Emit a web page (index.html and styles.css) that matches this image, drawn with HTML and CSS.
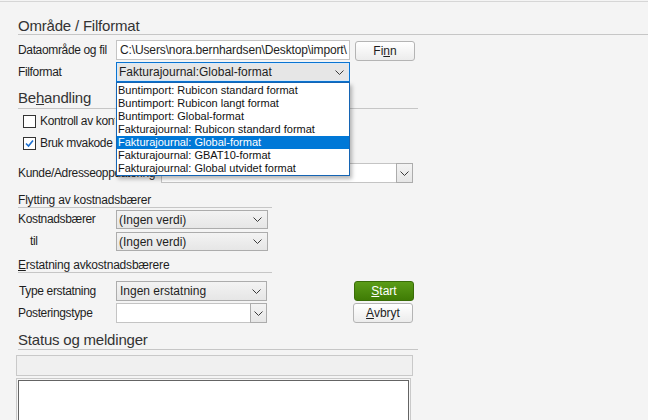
FILE: index.html
```html
<!DOCTYPE html>
<html lang="no">
<head>
<meta charset="utf-8">
<title>Import</title>
<link rel="stylesheet" href="styles.css">
</head>
<body>
<div class="topline"></div>
<div class="page">
  <h2 class="title title-full">Område / Filformat</h2>

  <div class="row row-file">
    <label class="lbl">Dataområde og fil</label>
    <div class="input w-main">C:\Users\nora.bernhardsen\Desktop\import\</div>
    <button class="btn btn-finn">Fi<u>n</u>n</button>
  </div>

  <div class="row row-format">
    <label class="lbl">Filformat</label>
    <div class="dd-wrap">
      <div class="select select-focus w-main">
        <span class="val">Fakturajournal:Global-format</span>
        <svg class="chev" width="9" height="5" viewBox="0 0 9 5"><polyline points="0.5,0.5 4.5,4.5 8.5,0.5" fill="none" stroke="#3a3a3a" stroke-width="1"/></svg>
      </div>
      <ul class="list">
        <li>Buntimport: Rubicon standard format</li>
        <li>Buntimport: Rubicon langt format</li>
        <li>Buntimport: Global-format</li>
        <li>Fakturajournal: Rubicon standard format</li>
        <li class="sel">Fakturajournal: Global-format</li>
        <li>Fakturajournal: GBAT10-format</li>
        <li>Fakturajournal: Global utvidet format</li>
      </ul>
    </div>
  </div>

  <h2 class="title title-mid title-beh">Be<u>h</u>andling</h2>

  <div class="check check-1">
    <span class="box"></span>
    <span class="ctext">Kontroll av kontonummer</span>
  </div>
  <div class="check check-2">
    <span class="box"><svg width="11" height="11" viewBox="0 0 11 11"><polyline points="2,5.5 4.5,8 9,2.5" fill="none" stroke="#1a6fd1" stroke-width="1.6"/></svg></span>
    <span class="ctext">Bruk mvakode fra fil</span>
  </div>

  <div class="row row-kunde">
    <label class="lbl lbl-kunde">Kunde/Adresseoppdatering</label>
    <div class="combo w-kunde">
      <div class="combo-in"></div>
      <div class="combo-btn"><svg class="chev" width="9" height="5" viewBox="0 0 9 5"><polyline points="0.5,0.5 4.5,4.5 8.5,0.5" fill="none" stroke="#3a3a3a" stroke-width="1"/></svg></div>
    </div>
  </div>

  <h3 class="sub sub-flytt">Flytting av kostnadsbærer</h3>

  <div class="row row-kb">
    <label class="lbl">Kostnadsbærer</label>
    <div class="select w-small">
      <span class="val">(Ingen verdi)</span>
      <svg class="chev" width="9" height="5" viewBox="0 0 9 5"><polyline points="0.5,0.5 4.5,4.5 8.5,0.5" fill="none" stroke="#3a3a3a" stroke-width="1"/></svg>
    </div>
  </div>
  <div class="row row-til">
    <label class="lbl lbl-indent">til</label>
    <div class="select w-small">
      <span class="val">(Ingen verdi)</span>
      <svg class="chev" width="9" height="5" viewBox="0 0 9 5"><polyline points="0.5,0.5 4.5,4.5 8.5,0.5" fill="none" stroke="#3a3a3a" stroke-width="1"/></svg>
    </div>
  </div>

  <h3 class="sub sub-erst"><u>E</u>rstatning avkostnadsbærere</h3>

  <div class="erst">
    <div class="erst-rows">
      <div class="row row-type">
        <label class="lbl lbl-type">Type erstatning</label>
        <div class="select w-small">
          <span class="val">Ingen erstatning</span>
          <svg class="chev" width="9" height="5" viewBox="0 0 9 5"><polyline points="0.5,0.5 4.5,4.5 8.5,0.5" fill="none" stroke="#3a3a3a" stroke-width="1"/></svg>
        </div>
      </div>
      <div class="row row-post">
        <label class="lbl">Posteringstype</label>
        <div class="combo w-small">
          <div class="combo-in"></div>
          <div class="combo-btn"><svg class="chev" width="9" height="5" viewBox="0 0 9 5"><polyline points="0.5,0.5 4.5,4.5 8.5,0.5" fill="none" stroke="#3a3a3a" stroke-width="1"/></svg></div>
        </div>
      </div>
    </div>
    <div class="erst-btns">
      <button class="btn btn-start"><u>S</u>tart</button>
      <button class="btn btn-avbryt"><u>A</u>vbryt</button>
    </div>
  </div>

  <h2 class="title title-mid title-status">Status og meldinger</h2>
  <div class="statusbar"></div>
  <div class="log"><div class="log-in"></div></div>
</div>
</body>
</html>
```
FILE: styles.css
```css
* { box-sizing: border-box; }
html, body { margin: 0; padding: 0; }
body {
  background: #f4f4f4;
  font-family: "Liberation Sans", Arial, sans-serif;
  font-size: 12px;
  color: #1e1e1e;
  width: 648px;
  height: 420px;
  overflow: hidden;
}
u { text-decoration: underline; text-underline-offset: 1px; }
.topline { height: 1px; margin-top: 1px; background: #d6d6d6; }
.page { padding-left: 18px; }

.title {
  margin: 0;
  font-size: 15px;
  letter-spacing: -0.2px;
  font-weight: normal;
  line-height: 17px;
  color: #333;
  border-bottom: 1px solid #c6c6c6;
}
.title-full { margin-top: 15px; }
.title-mid { width: 400px; }
.title-beh { margin-top: 7px; padding-bottom: 2px; }
.title-status { margin-top: 8px; padding-bottom: 1px; }

.sub {
  margin: 0;
  font-size: 12px;
  letter-spacing: -0.2px;
  font-weight: normal;
  line-height: 14px;
  color: #1e1e1e;
  width: 254px;
  border-bottom: 1px solid #c6c6c6;
}
.sub-flytt { margin-top: 10px; }
.sub-erst { margin-top: 7px; }

.row { display: flex; align-items: flex-start; height: 20px; }
.lbl { width: 98px; flex: none; line-height: 20px; white-space: nowrap; letter-spacing: -0.35px; }
.lbl-kunde { width: 143px; }
.lbl-indent { padding-left: 12px; line-height: 19px; }
.lbl-type { padding-left: 1px; }
.row-file { margin-top: 5px; }
.row-format { margin-top: 2px; }
.row-kunde { margin-top: 13px; }
.row-kb { margin-top: 2px; height: 19px; }
.row-kb .lbl { line-height: 19px; }
.row-til { margin-top: 3px; height: 19px; }
.row-post { margin-top: 2px; }

.w-main { width: 234px; }
.w-small { width: 152px; }
.w-kunde { width: 252px; }

.input {
  height: 20px;
  background: #fff;
  border: 1px solid #c4c4c4;
  padding: 0 0 0 3px;
  line-height: 18px;
  letter-spacing: -0.13px;
  white-space: nowrap;
  overflow: hidden;
}

.select {
  height: 100%;
  display: flex;
  align-items: center;
  justify-content: space-between;
  border: 1px solid #acacac;
  background: linear-gradient(#f3f3f3, #e6e6e6);
  padding: 0 5px 0 2px;
  white-space: nowrap;
}
.row-type .select .val { padding-left: 1px; }
.select-focus {
  height: 20px;
  border-color: #0a74d1;
  background: #e6e6e6;
  box-shadow: inset 0 0 0 1px #d9e9f8;
}
.chev { display: block; flex: none; }

.dd-wrap { position: relative; }
.list {
  position: absolute;
  left: 0;
  top: 20px;
  width: 234px;
  margin: 0;
  padding: 1px 0 0 0;
  list-style: none;
  background: #fff;
  border: 1px solid #1464b4;
  box-shadow: 2px 3px 4px rgba(0,0,0,0.28);
  font-size: 11px;
  z-index: 10;
}
.list li { height: 13px; line-height: 13px; padding-left: 1px; white-space: nowrap; color: #111; }
.list li.sel { background: #0078d7; color: #fff; }

.combo { display: flex; height: 20px; }
.combo-in { flex: 1; background: #fff; border: 1px solid #c4c4c4; border-right: none; }
.combo-btn {
  width: 17px;
  flex: none;
  border: 1px solid #acacac;
  background: linear-gradient(#f3f3f3, #e6e6e6);
  display: flex;
  align-items: center;
  justify-content: center;
}

.check { display: flex; align-items: center; height: 13px; line-height: 13px; }
.check-1 { margin-top: 6px; }
.check-2 { margin-top: 9px; }
.box {
  width: 13px; height: 13px;
  flex: none;
  margin-left: 5px;
  margin-right: 4px;
  background: #fff;
  border: 1px solid #333;
  display: flex; align-items: center; justify-content: center;
}
.box svg { display: block; }
.ctext {
  width: 75px;
  overflow: hidden;
  white-space: nowrap;
  letter-spacing: -0.35px;
}

.btn {
  font-family: "Liberation Sans", Arial, sans-serif;
  font-size: 12px;
  height: 20px;
  width: 60px;
  padding: 0;
  border-radius: 3px;
  border: 1px solid #b4b4b4;
  background: linear-gradient(#ffffff, #ececec);
  color: #1e1e1e;
  line-height: 18px;
}
.btn-finn { margin-left: 5px; margin-top: 1px; }

.erst { display: flex; margin-top: 8px; }
.erst-rows { width: 249px; }
.erst-btns { display: flex; flex-direction: column; gap: 2px; margin-left: 87px; }
.btn-start {
  background: linear-gradient(#5b9c18, #3f7c05);
  border-color: #3a6d08;
  color: #fff;
}
.btn-avbryt { margin-left: -1px; }

.statusbar {
  margin-top: 5px;
  margin-left: -2px;
  width: 397px;
  height: 21px;
  background: #f0f0f0;
  border: 1px solid #c9c9c9;
}
.log {
  margin-top: 2px;
  margin-left: -2px;
  width: 395px;
  height: 60px;
  border: 1px solid #c9c9c9;
  padding: 1px;
  background: #f7f7f7;
}
.log-in { height: 100%; background: #fff; border: 1px solid #646464; }
```
